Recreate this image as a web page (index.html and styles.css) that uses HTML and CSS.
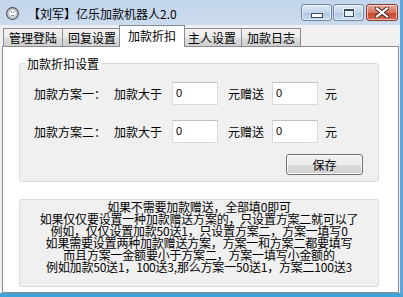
FILE: index.html
```html
<!DOCTYPE html>
<html lang="zh-CN">
<head>
<meta charset="utf-8">
<title>亿乐加款机器人</title>
<link rel="stylesheet" href="styles.css">
</head>
<body>
<div class="window">
  <div class="titlebar">
    <svg class="app-icon" width="13" height="13" viewBox="0 0 13 13">
      <circle cx="6.5" cy="6.5" r="5.8" fill="#e9ecef" stroke="#4a4f57" stroke-width="1.2"/>
      <circle cx="6.5" cy="6.5" r="4" fill="#ffffff" stroke="#9aa1aa" stroke-width="0.8"/>
      <path d="M4.6 5.2h1.2M7.2 5.2h1.2M5 8.2c0.8 0.7 2.2 0.7 3 0" stroke="#555" stroke-width="0.9" fill="none"/>
    </svg>
    <span class="title">【刘军】亿乐加款机器人2.0</span>
    <div class="caption-buttons">
      <div class="cbtn cbtn-min"><span class="glyph-min"></span></div>
      <div class="cbtn cbtn-max"><span class="glyph-max"></span></div>
      <div class="cbtn cbtn-close">
        <svg width="14" height="11" viewBox="0 0 14 11">
          <path d="M2 1.5 L12 9.5 M12 1.5 L2 9.5" stroke="#3a2420" stroke-width="4" stroke-linecap="square"/>
          <path d="M2 1.5 L12 9.5 M12 1.5 L2 9.5" stroke="#ffffff" stroke-width="2.2" stroke-linecap="square"/>
        </svg>
      </div>
    </div>
  </div>
  <div class="client">
    <div class="tabs">
      <div class="tab">管理登陆</div>
      <div class="tab">回复设置</div>
      <div class="tab tab-active">加款折扣</div>
      <div class="tab">主人设置</div>
      <div class="tab">加款日志</div>
    </div>
    <div class="tabpage">
      <div class="groupbox">
        <div class="groupbox-title">加款折扣设置</div>
        <div class="row">
          <span class="lbl-plan">加款方案一：</span>
          <span class="lbl">加款大于</span>
          <span class="input">0</span>
          <span class="lbl lbl-give">元赠送</span>
          <span class="input">0</span>
          <span class="lbl lbl-yuan">元</span>
        </div>
        <div class="row">
          <span class="lbl-plan">加款方案二：</span>
          <span class="lbl">加款大于</span>
          <span class="input">0</span>
          <span class="lbl lbl-give">元赠送</span>
          <span class="input">0</span>
          <span class="lbl lbl-yuan">元</span>
        </div>
        <div class="btn-row">
          <div class="button">保存</div>
        </div>
      </div>
      <div class="notes">
        <div>如果不需要加款赠送，全部填0即可</div>
        <div>如果仅仅要设置一种加款赠送方案的，只设置方案二就可以了</div>
        <div>例如，仅仅设置加款50送1，只设置方案二，方案一填写0</div>
        <div>如果需要设置两种加款赠送方案，方案一和方案二都要填写</div>
        <div>而且方案一金额要小于方案二，方案一填写小金额的</div>
        <div>例如加款50送1，100送3,那么方案一50送1，方案二100送3</div>
      </div>
    </div>
  </div>
</div>
</body>
</html>
```

FILE: styles.css
```css
html, body {
  margin: 0;
  padding: 0;
}
body {
  width: 403px;
  height: 297px;
  overflow: hidden;
  font-family: "Noto Sans CJK SC", "Liberation Sans", sans-serif;
  font-size: 12px;
  color: #000;
  background: #c9d9ed;
}
.window {
  width: 403px;
  height: 297px;
  box-sizing: border-box;
  display: flex;
  flex-direction: column;
  background: linear-gradient(#c3d5ec, #cddcee 30px, #cddcee);
  border-right: 3px solid #5ba7dc;
  border-bottom: 4px solid #3fa4d6;
}
.titlebar {
  height: 25px;
  flex: none;
  display: flex;
  align-items: center;
  padding-left: 6px;
  position: relative;
}
.app-icon {
  flex: none;
  margin-top: 1px;
}
.title {
  margin-left: 9px;
  font-size: 12px;
  line-height: 14px;
  margin-top: 2px;
  color: #000;
}
.caption-buttons {
  position: absolute;
  top: 4px;
  right: 2px;
  display: flex;
  gap: 1px;
}
.cbtn {
  height: 17px;
  box-sizing: border-box;
  border: 1px solid #6d86a8;
  border-radius: 3px;
  display: flex;
  align-items: center;
  justify-content: center;
  box-shadow: inset 0 0 0 1px rgba(255,255,255,0.55);
}
.cbtn-min, .cbtn-max {
  width: 31px;
  background: linear-gradient(#dde8f5, #c4d6ec 50%, #b0c6e2 51%, #c7daf0);
}
.cbtn-max {
  margin-right: 1px;
}
.cbtn-close {
  width: 32px;
  border-color: #8a3a2e;
  background: linear-gradient(#e9a898, #d8735f 50%, #c7432c 51%, #d66a50);
}
.glyph-min {
  width: 10px;
  height: 3px;
  margin-top: 6px;
  background: #fff;
  border: 1px solid #3b4b62;
}
.glyph-max {
  width: 8px;
  height: 5px;
  border: 1px solid #3b4b62;
  border-top-width: 2px;
  background: #e9f0f8;
  box-shadow: 0 0 0 1px rgba(255,255,255,0.6);
}
.client {
  flex: 1;
  display: flex;
  flex-direction: column;
  background: #f0f0f0;
  padding: 0 1px 0 2px;
}
.tabs {
  height: 21px;
  flex: none;
  display: flex;
  align-items: flex-end;
  padding-left: 1px;
  position: relative;
  z-index: 1;
}
.tab {
  width: 60px;
  height: 18px;
  box-sizing: border-box;
  border: 1px solid #898c95;
  border-bottom: none;
  margin-right: -1px;
  background: linear-gradient(#f3f3f3, #ebebeb 50%, #dddddd 51%, #cfcfcf);
  text-align: center;
  line-height: 17px;
  font-size: 12px;
}
.tab-active {
  width: 66px;
  margin: 0 -3px -1px -2px;
  background: #fff;
  position: relative;
  z-index: 2;
  line-height: 20px;
  padding-bottom: 1px;
  height: 22px;
}
.tabpage {
  flex: 1;
  background: #fff;
  border: 1px solid #898c95;
  padding: 10px 19px 0 16px;
  display: flex;
  flex-direction: column;
}
.groupbox {
  margin-top: 6px;
  background: #f0f0f0;
  border: 1px solid #d5dbe0;
  border-radius: 3px;
  padding: 0 15px 6px 14px;
  height: 119px;
  box-sizing: border-box;
  display: flex;
  flex-direction: column;
}
.groupbox-title {
  align-self: flex-start;
  margin: -7px 0 0 -8px;
  padding: 0 2px 0 1px;
  background: #fbfbfb;
  line-height: 14px;
  font-size: 12px;
}
.row {
  display: flex;
  align-items: center;
  height: 23px;
  margin-top: 11px;
}
.row + .row {
  margin-top: 15px;
}
.lbl-plan {
  width: 80px;
}
.lbl {
  margin-right: 10px;
}
.lbl-give {
  margin-left: 10px;
  margin-right: 8px;
}
.lbl-yuan {
  margin-left: 7px;
}
.input {
  width: 46px;
  height: 23px;
  box-sizing: border-box;
  background: #fff;
  border: 1px solid #d4dbe2;
  border-top-color: #b9c3cc;
  padding-left: 3px;
  line-height: 21px;
  font-family: "Liberation Sans", sans-serif;
  font-size: 11px;
}
.btn-row {
  margin-top: auto;
  display: flex;
  justify-content: flex-end;
}
.button {
  width: 77px;
  height: 21px;
  box-sizing: border-box;
  border: 1px solid #707070;
  border-radius: 3px;
  background: linear-gradient(#f2f2f2, #ebebeb 50%, #dddddd 51%, #cfcfcf);
  box-shadow: inset 0 0 0 1px #fcfcfc;
  text-align: center;
  line-height: 19px;
}
.notes {
  margin-top: 17px;
  height: 88px;
  box-sizing: border-box;
  background: #f0f0f0;
  border: 1px solid #d9dde1;
  border-radius: 2px;
  padding-top: 1px;
  text-align: center;
  font-size: 12px;
  line-height: 12px;
  letter-spacing: -0.2px;
}
```
